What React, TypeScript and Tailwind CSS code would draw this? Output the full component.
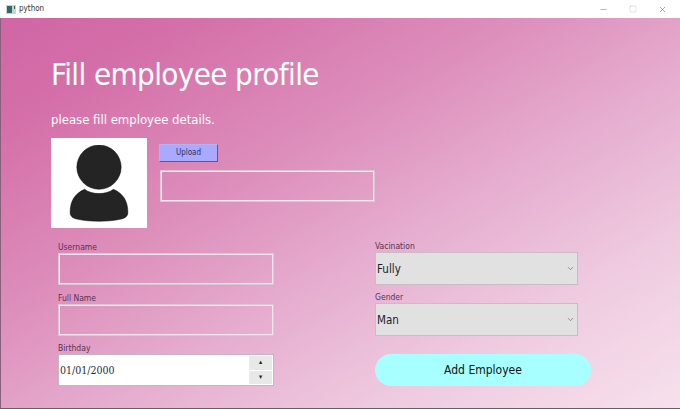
import { ChevronDown, Minus, Square, X } from "lucide-react";

const font = "font-['DejaVu_Sans_Condensed','DejaVu_Sans',sans-serif] [font-stretch:condensed]";

function Field({ label, children }: { label: string; children: React.ReactNode }) {
  return (
    <div className="flex flex-col">
      <label className="h-[14px] text-[8.5px] leading-[16px] text-[#5a3350]">{label}</label>
      {children}
    </div>
  );
}

function TextBox() {
  return <div className="h-[32px] w-[216px] border border-[#d8c8d3] shadow-[inset_0_0_0_1px_#efe6ec]" />;
}

function Combo({ value }: { value: string }) {
  return (
    <div className="flex h-[33px] w-[203px] items-center justify-between border border-[#c9bcc5] bg-[#e1e1e1] pl-[1px] pr-[2px] text-[11.5px] text-[#1c1c2c]">
      <span className="pt-[2px]">{value}</span>
      <ChevronDown size={9} strokeWidth={1.5} className="text-[#555]" />
    </div>
  );
}

export default function App() {
  return (
    <div className={`flex h-[409px] w-[680px] flex-col overflow-hidden bg-white ${font}`}>
      {/* Title bar */}
      <div className="flex h-[18px] shrink-0 items-center bg-white pl-[6px]">
        <svg width="10" height="9" viewBox="0 0 10 9" className="mr-[3px]">
          <rect x="0" y="0" width="10" height="9" fill="#c8d4d0" />
          <rect x="1" y="1" width="5" height="7" fill="#2f6b66" />
          <rect x="8" y="1" width="1" height="3" fill="#4a5a58" />
        </svg>
        <span className="text-[8px] text-[#333]">python</span>
        <div className="ml-auto flex items-center text-[#444]">
          <Minus size={9} strokeWidth={1} className="mr-[21px]" />
          <Square size={8} strokeWidth={0.8} className="mr-[21px] text-[#999]" />
          <X size={9} strokeWidth={1.2} className="mr-[13px]" />
        </div>
      </div>

      {/* Window body */}
      <div className="flex flex-1 flex-col border-b border-l border-b-[#6f5a68] border-l-[#8a5f7c] bg-[linear-gradient(150deg,#d066a4_0%,#d46fa9_14%,#dd8ebb_38%,#e6aed0_58%,#efcbe0_78%,#f7e1ed_100%)] pl-[50px]">
        <h1 className="mt-[32px] h-[48px] text-[31px] leading-[48px] tracking-[-0.6px] text-white">Fill employee profile</h1>
        <p className="mt-[12px] h-[20px] text-[13px] leading-[20px] text-white">please fill employee details.</p>

        <div className="mt-[8px] flex">
          <div className="flex h-[90px] w-[96px] items-center justify-center bg-white">
            <svg width="60" height="77" viewBox="0 0 62 80">
              <circle cx="31" cy="23" r="23" fill="#242424" stroke="#000" strokeWidth="0.5" />
              <path d="M16 46 C24 52 38 52 46 46 C55 50 61 57 61 70 C61 74 58 76 54 77 C40 80 22 80 8 77 C4 76 1 74 1 70 C1 57 7 50 16 46 Z" fill="#242424" stroke="#000" strokeWidth="0.5" />
            </svg>
          </div>
          <div className="ml-[12px] flex flex-col pt-[6px]">
            <button className="h-[18px] w-[59px] border border-[#b4b4f4] border-b-[#5a5a90] border-r-[#5a5a90] bg-[#a9a9ff] text-[8px] text-[#30305a]">Upload</button>
            <div className="ml-[1px] mt-[8px] h-[32px] w-[215px] border border-[#d8c8d3] shadow-[inset_0_0_0_1px_#efe6ec]" />
          </div>
        </div>

        <div className="mt-[10px] grid grid-cols-[317px_1fr] pl-[7px]">
          <div className="flex flex-col pt-[1px]">
            <Field label="Username"><TextBox /></Field>
            <div className="mt-[5px]">
              <Field label="Full Name"><TextBox /></Field>
            </div>
            <div className="mt-[4px]">
              <Field label="Birthday">
                <div className="flex h-[32px] w-[216px] items-center justify-between border border-[#c4b6c0] bg-white pl-[1px] pr-[1px] font-['DejaVu_Serif','Liberation_Serif',serif] text-[10.5px] text-[#1c2c3c]">
                  <span className="pt-[1px]">01/01/2000</span>
                  <div className="flex h-full w-[23px] flex-col gap-px py-px text-[#222]">
                    <div className="flex flex-1 items-center justify-center bg-[#e8e8e8] text-[7px] leading-none">▴</div>
                    <div className="flex flex-1 items-center justify-center bg-[#e8e8e8] text-[7px] leading-none">▾</div>
                  </div>
                </div>
              </Field>
            </div>
          </div>
          <div className="flex flex-col">
            <Field label="Vacination"><Combo value="Fully" /></Field>
            <div className="mt-[4px]">
              <Field label="Gender"><Combo value="Man" /></Field>
            </div>
            <button className="mt-[18px] h-[32px] w-[216px] rounded-[16px] bg-[#a8ffff] text-[12px] text-[#111]">Add Employee</button>
          </div>
        </div>
      </div>
    </div>
  );
}
